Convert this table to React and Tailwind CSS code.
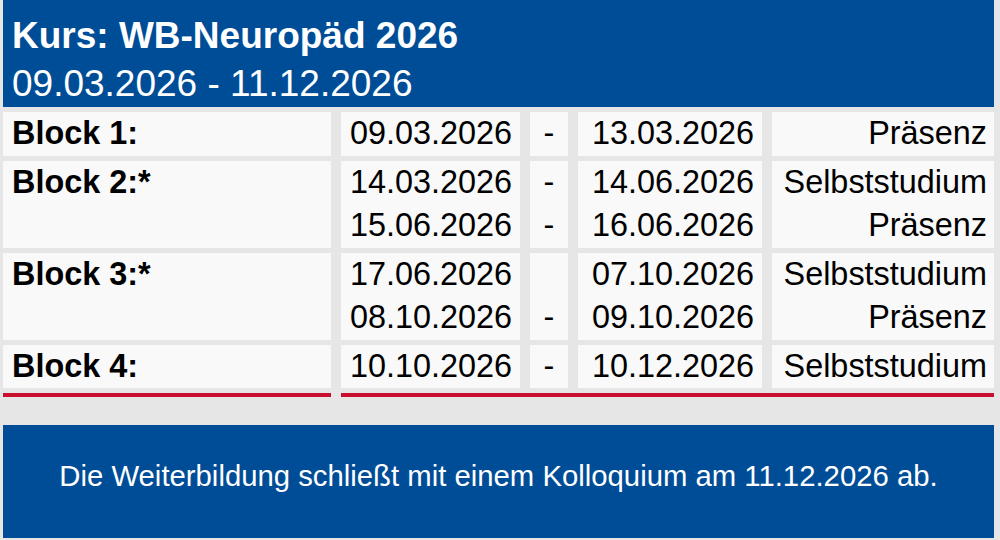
const rows = [
  { label: 'Block 1:', lines: [['09.03.2026', '-', '13.03.2026', 'Präsenz']] },
  {
    label: 'Block 2:*',
    lines: [
      ['14.03.2026', '-', '14.06.2026', 'Selbststudium'],
      ['15.06.2026', '-', '16.06.2026', 'Präsenz'],
    ],
  },
  {
    label: 'Block 3:*',
    lines: [
      ['17.06.2026', '', '07.10.2026', 'Selbststudium'],
      ['08.10.2026', '-', '09.10.2026', 'Präsenz'],
    ],
  },
  { label: 'Block 4:', lines: [['10.10.2026', '-', '10.12.2026', 'Selbststudium']] },
];

function Cell({ lines, idx, className }) {
  return (
    <div className={'bg-[#f9f9f9] leading-[43.5px] ' + className}>
      {lines.map((l, i) => (
        <div key={i} className="h-[43.5px] whitespace-pre">
          {l[idx] || ' '}
        </div>
      ))}
    </div>
  );
}

export default function App() {
  return (
    <div className="w-[1000px] h-[540px] bg-[#e6e6e6] pl-[3px] pr-[6px] font-['Liberation_Sans',Arial,sans-serif] overflow-hidden">
      <div className="h-[107px] bg-[#004d97] text-white pl-[9px] pt-[12px] text-[37px] leading-[48px]">
        <div className="font-bold">Kurs: WB-Neuropäd 2026</div>
        <div>09.03.2026 - 11.12.2026</div>
      </div>

      <div className="mt-[5px] grid grid-cols-[328px_179px_38px_184px_222px] gap-x-[10px] gap-y-[5px] text-[32.4px] text-black">
        {rows.map(r => (
          <div key={r.label} className="contents">
            <div className="bg-[#f9f9f9] pl-[9px] font-bold leading-[43.5px]">{r.label}</div>
            <Cell lines={r.lines} idx={0} className="pl-[9px]" />
            <Cell lines={r.lines} idx={1} className="text-center" />
            <Cell lines={r.lines} idx={2} className="text-right pr-[8px]" />
            <Cell lines={r.lines} idx={3} className="text-right pr-[7px]" />
          </div>
        ))}
      </div>

      <div className="mt-[5px] grid grid-cols-[328px_653px] gap-x-[10px]">
        <div className="h-[4px] bg-[#c8102e]"></div>
        <div className="h-[4px] bg-[#c8102e]"></div>
      </div>

      <div className="mt-[28px] h-[113px] bg-[#004d97] text-white text-center pt-[33px] text-[29.3px] leading-[36px]">
        Die Weiterbildung schließt mit einem Kolloquium am 11.12.2026 ab.
      </div>
    </div>
  );
}
